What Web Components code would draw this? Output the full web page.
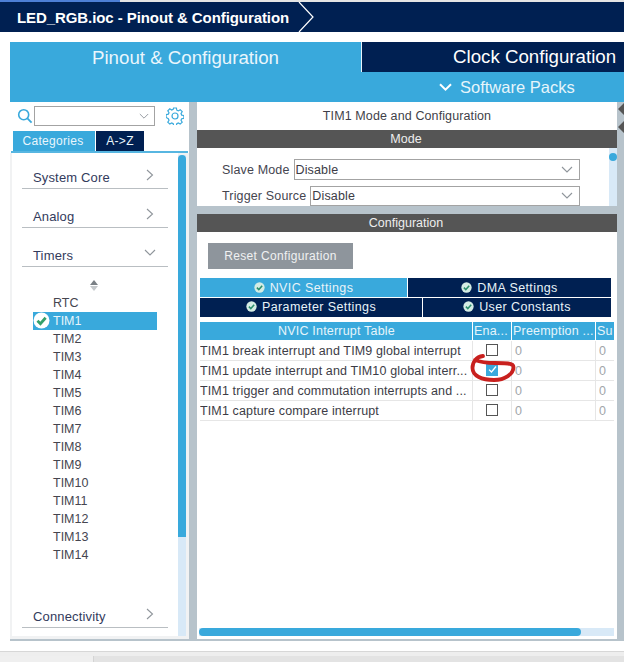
<!DOCTYPE html>
<html>
<head>
<meta charset="utf-8">
<title>LED_RGB.ioc - Pinout & Configuration</title>
<style>
  html, body { margin: 0; padding: 0; background: #fff; }
  body { width: 624px; height: 662px; overflow: hidden; font-family: "Liberation Sans", Arial, sans-serif; }
</style>
</head>
<body>
<cube-app></cube-app>

<script>
const NAVY = "#002052";
const BLUE = "#39a9dc";
const GREY = "#b7c3cb";

const CHECK_BADGE = (size, bg, fg, width = 2.2) => `
  <svg width="${size}" height="${size}" viewBox="0 0 16 16" style="flex:none">
    <circle cx="8" cy="8" r="7.5" fill="${bg}"/>
    <path d="M4.2 8.2 7 11 11.9 5.4" fill="none" stroke="${fg}" stroke-width="${width}"/>
  </svg>`;

const CHEVRON_RIGHT = `<svg width="8" height="12" viewBox="0 0 8 12"><path d="M1 1l5.5 5L1 11" fill="none" stroke="#8f959b" stroke-width="1.1"/></svg>`;
const CHEVRON_DOWN = `<svg width="12" height="8" viewBox="0 0 12 8"><path d="M1 1l5 5 5-5" fill="none" stroke="#8f959b" stroke-width="1.1"/></svg>`;

// ----------------------- BREADCRUMB -----------------------
class CubeTitleBar extends HTMLElement {
  constructor() {
    super();
    this.attachShadow({ mode: "open" }).innerHTML = `
      <style>
        :host { display: block; }
        .line { height: 2px; background: linear-gradient(to right, #4d7fd6 120px, #e4e4e4 120px); }
        .bar { height: 30px; background: ${NAVY}; display: flex; align-items: center; padding-left: 17px;
               color: #fff; font-size: 15px; font-weight: bold; letter-spacing: -.08px; gap: 9px; }
        svg { flex: none; }
      </style>
      <div class="line"></div>
      <div class="bar">
        <slot></slot>
        <svg width="17" height="30" viewBox="0 0 17 30"><path d="M1 0l14 15L1 30" fill="none" stroke="#fff" stroke-width="1.2"/></svg>
      </div>`;
  }
}

// ----------------------- MAIN TABS -----------------------
class CubeMainTabs extends HTMLElement {
  constructor() {
    super();
    this.attachShadow({ mode: "open" }).innerHTML = `
      <style>
        :host { display: flex; height: 60px; margin: 10px 0 0 10px; background: ${BLUE}; color: #fff; font-size: 18.7px; white-space: nowrap; }
        .pinout { width: 351px; padding: 4px 0 0 82px; box-sizing: border-box; line-height: 24px; color: #eaf6fc; }
        .right { flex: 1; min-width: 0; border-left: 1px solid #e8f4fa; display: flex; flex-direction: column; }
        .clock { height: 30px; background: ${NAVY}; line-height: 30px; padding-left: 91px; }
        .packs { height: 30px; margin-left: -1px; background: ${BLUE}; color: #e6f5fb; font-size: 16.5px; line-height: 30px;
                 display: flex; align-items: center; gap: 8px; padding-left: 78px; }
      </style>
      <div class="pinout">Pinout &amp; Configuration</div>
      <div class="right">
        <div class="clock">Clock Configuration</div>
        <div class="packs">
          <svg width="13" height="9" viewBox="0 0 13 9"><path d="M1 1.2l5.5 5.5L12 1.2" fill="none" stroke="#fff" stroke-width="2"/></svg>
          Software Packs
        </div>
      </div>`;
  }
}

// ----------------------- SIDEBAR -----------------------
class CubeCategory extends HTMLElement {
  constructor() {
    super();
    const open = this.hasAttribute("open");
    this.attachShadow({ mode: "open" }).innerHTML = `
      <style>
        :host { display: flex; justify-content: space-between; align-items: center; box-sizing: border-box;
                width: 146px; height: 23px; margin-left: 10px; border-bottom: 1px solid #b9bec2;
                color: #333b5c; font-size: 13px; letter-spacing: .15px; padding: 0 14px 0 11px; }
        span { display: flex; margin-top: -4px; }
      </style>
      <slot></slot><span>${open ? CHEVRON_DOWN : CHEVRON_RIGHT}</span>`;
    if (open) this.shadowRoot.querySelector("span").style.marginRight = "-2px";
  }
}

class CubePeripheral extends HTMLElement {
  constructor() {
    super();
    const on = this.hasAttribute("selected");
    this.attachShadow({ mode: "open" }).innerHTML = `
      <style>
        :host { display: flex; align-items: center; height: 18px; width: 124px; box-sizing: border-box; padding-left: 20px;
                position: relative; font-size: 12.5px; color: ${on ? "#e6f5fb" : "#45454f"}; background: ${on ? BLUE : "transparent"}; }
        .badge { position: absolute; left: 0; top: 0; display: flex; }
      </style>
      ${on ? `<span class="badge">${CHECK_BADGE(17, "#fff", "#35a06a", 2.6)}</span>` : ""}
      <slot></slot>`;
  }
}

class CubeSidebar extends HTMLElement {
  constructor() {
    super();
    const names = ["RTC", "TIM1", "TIM2", "TIM3", "TIM4", "TIM5", "TIM6", "TIM7", "TIM8", "TIM9", "TIM10", "TIM11", "TIM12", "TIM13", "TIM14"];
    this.attachShadow({ mode: "open" }).innerHTML = `
      <style>
        :host { display: flex; flex-direction: column; width: 179px; flex: none; background: #fff; }
        .search { height: 29px; display: flex; align-items: center; padding: 0 0 1px 7px; box-sizing: border-box; gap: 1px; }
        .combo { width: 121px; height: 20px; box-sizing: border-box; border: 1px solid #a3a3a3; display: flex;
                 align-items: center; justify-content: flex-end; padding-right: 5px; margin-right: 10px; }
        .tabs { display: flex; height: 20px; padding-left: 3px; gap: 1px; font-size: 12px; letter-spacing: .3px; }
        .tabs div { display: flex; align-items: center; justify-content: center; color: #e8f6fc; }
        .cat { width: 82px; padding-right: 2px; box-sizing: border-box; background: ${BLUE}; }
        .az { width: 48px; background: ${NAVY}; }
        .rule { height: 2px; background: ${BLUE}; margin: 0 1px; opacity: .85; }
        .body { flex: 1; display: flex; min-height: 0; padding-left: 2px; background: #f1f2f3; }
        .tree { flex: 1; background: #fff; display: flex; flex-direction: column; padding-top: 13px; margin-bottom: 3px; }
        .tree cube-category { margin-bottom: 16px; }
        .sort { display: flex; justify-content: flex-start; margin: -3px 0 3px 78px; height: 11px; }
        .list { display: flex; flex-direction: column; margin-left: 21px; }
        .spacer { flex: 1; }
        .tree cube-category:last-child { margin-bottom: 8px; }
        .scroll { width: 8px; margin: 2px 3px 3px 0; background: #d8e9f7; }
        .thumb { height: 382px; background: ${BLUE}; border-radius: 4px 4px 0 0; }
      </style>
      <div class="search">
        <svg width="16" height="16" viewBox="0 0 16 16"><circle cx="6.7" cy="6.7" r="5" fill="none" stroke="${BLUE}" stroke-width="1.6"/><path d="M10.4 10.4 14.6 14.6" stroke="${BLUE}" stroke-width="1.8"/></svg>
        <div class="combo">${CHEVRON_DOWN.replace('width="12" height="8"', 'width="10" height="7"')}</div>
        <svg width="18" height="18" viewBox="0 0 18 18"><g fill="none" stroke="${BLUE}" stroke-width="1.2"><circle cx="9" cy="9" r="3"/><path d="M7.6 1h2.8l.4 2.2 1.5.7 1.9-1.2 2 2-1.2 1.9.7 1.5 2.2.4v2.8l-2.2.4-.7 1.5 1.2 1.9-2 2-1.9-1.2-1.5.7-.4 2.2H7.6l-.4-2.2-1.5-.7-1.9 1.2-2-2 1.2-1.9-.7-1.5L.1 10.400V7.600l2.2-.4.7-1.5-1.200-1.900 2-2 1.900 1.200 1.500-.7z"/></g></svg>
      </div>
      <div class="tabs"><div class="cat">Categories</div><div class="az">A-&gt;Z</div></div>
      <div class="rule"></div>
      <div class="body">
        <div class="tree">
          <cube-category>System Core</cube-category>
          <cube-category>Analog</cube-category>
          <cube-category open>Timers</cube-category>
          <div class="sort"><svg width="8" height="11" viewBox="0 0 8 11"><path d="M4 0l4 5H0z" fill="#7a8085"/><path d="M4 11l4-5H0z" fill="#c4c8cb"/></svg></div>
          <div class="list">${names.map((n) => `<cube-peripheral ${n === "TIM1" ? "selected" : ""}>${n}</cube-peripheral>`).join("")}</div>
          <div class="spacer"></div>
          <cube-category>Connectivity</cube-category>
        </div>
        <div class="scroll"><div class="thumb"></div></div>
      </div>`;
  }
}

// ----------------------- MODE PANEL -----------------------
class CubeSelectRow extends HTMLElement {
  constructor() {
    super();
    this.attachShadow({ mode: "open" }).innerHTML = `
      <style>
        :host { display: flex; align-items: center; color: #45454f; font-size: 12.5px; padding-left: 25px; height: 21px; letter-spacing: .15px; }
        .label { padding-top: 1px; }
        .box { flex: 1; height: 100%; margin: 0 29px 0 4px; box-sizing: border-box; border: 1px solid #a3a3a3;
               display: flex; align-items: center; justify-content: space-between; padding: 1px 6px 0 1px; color: #3c3c46; }
      </style>
      <span class="label"><slot></slot></span>
      <div class="box">${this.getAttribute("value")}${CHEVRON_DOWN}</div>`;
  }
}

class CubeHeader extends HTMLElement {
  constructor() {
    super();
    this.attachShadow({ mode: "open" }).innerHTML = `
      <style>
        :host { display: block; height: 18px; line-height: 19px; background: #555; color: #eee; font-size: 12.5px;
                text-align: center; padding-right: 2px; box-sizing: border-box; }
      </style><slot></slot>`;
  }
}

// ----------------------- SETTINGS TABS -----------------------
class CubeSettingTab extends HTMLElement {
  constructor() {
    super();
    const active = this.hasAttribute("active");
    this.attachShadow({ mode: "open" }).innerHTML = `
      <style>
        :host { display: flex; align-items: center; justify-content: center; gap: 5px; box-sizing: border-box;
                background: ${active ? BLUE : NAVY}; color: #e8f3f8; font-size: 12.5px; letter-spacing: .4px; }
        :host([raised]) { padding-bottom: 2px; }
      </style>
      ${CHECK_BADGE(11, "#d4ece4", "#2c8f6c")}<slot></slot>`;
  }
}

// ----------------------- NVIC TABLE -----------------------
class CubeNvicRow extends HTMLElement {
  constructor() {
    super();
    const on = this.hasAttribute("checked");
    this.attachShadow({ mode: "open" }).innerHTML = `
      <style>
        :host { display: grid; grid-template-columns: 273px 39px 84px 1fr; height: 20px; box-sizing: border-box;
                border-bottom: 1px solid #e6e6e6; font-size: 12.5px; letter-spacing: .13px; color: #3c3c46; }
        div { display: flex; align-items: center; border-right: 1px solid #e6e6e6; white-space: nowrap; overflow: hidden; }
        .chk { justify-content: center; padding: 0 0 2px; }
        .chk span { display: flex; align-items: center; justify-content: center; width: 10px; height: 10px; border: 1px solid #555; background: #fff; }
        .chk span.on { background: ${BLUE}; border-color: ${BLUE}; }
        .num { color: #a2a6aa; padding-left: 3px; }
        .num:last-child { border-right: none; }
      </style>
      <div><slot></slot></div>
      <div class="chk"><span class="${on ? "on" : ""}">${on ? '<svg width="9" height="9" viewBox="0 0 9 9"><path d="M1 4.600 3.500 7 8 1.500" fill="none" stroke="#fff" stroke-width="1.300"/></svg>' : ""}</span></div>
      <div class="num">0</div>
      <div class="num">0</div>`;
  }
}

class CubeNvicTable extends HTMLElement {
  constructor() {
    super();
    this.attachShadow({ mode: "open" }).innerHTML = `
      <style>
        :host { display: block; position: relative; width: 414px; margin-left: 3px; }
        .head { display: grid; grid-template-columns: 273px 39px 84px 1fr; gap: 0; height: 18px; margin-bottom: 1px;
                font-size: 12.5px; letter-spacing: .2px; color: #e6f5fb; }
        .head div { background: ${BLUE}; border-right: 1px solid #fff; line-height: 19px; white-space: nowrap; overflow: hidden; padding-left: 1px; }
        .head div:first-child { text-align: center; }
        .head div:last-child { border-right: none; }
        .mark { position: absolute; left: 270px; top: 32px; }
      </style>
      <div class="head"><div>NVIC Interrupt Table</div><div>Ena...</div><div>Preemption ...</div><div>Su</div></div>
      <slot></slot>
      <svg class="mark" width="46" height="28" viewBox="0 0 46 28">
        <path d="M13 2C6 3 2.500 8 2.500 14 2.500 22 12 26 24 26 35 26 43.500 20 43.500 13 43.500 9 35 9 25 9 18 9 10 8 5 6" fill="none" stroke="#c8201e" stroke-width="3.800" stroke-linecap="round"/>
      </svg>`;
  }
}

// ----------------------- RIGHT PANEL -----------------------
class CubeConfigPanel extends HTMLElement {
  constructor() {
    super();
    this.attachShadow({ mode: "open" }).innerHTML = `
      <style>
        :host { display: flex; flex-direction: column; flex: 1; min-width: 0; background: #fff; }
        .title { height: 28px; line-height: 28px; text-align: center; color: #3f3f49; font-size: 12.5px; letter-spacing: .11px; }
        .mode { height: 58px; display: flex; overflow: hidden; }
        .fields { flex: 1; display: flex; flex-direction: column; gap: 6px; padding-top: 11px; }
        .vscroll { width: 8px; background: #d8e9f7; display: flex; justify-content: center; }
        .dot { width: 8px; height: 8px; margin-top: 5px; border-radius: 50%; background: ${BLUE}; }
        .gap { height: 8px; background: ${GREY}; }
        .reset { width: 145px; height: 26px; margin: 11px 0 9px 11px; background: #8e959c; color: #f0f1f2; font-size: 12px;
                 letter-spacing: .35px; display: flex; align-items: center; justify-content: center; }
        .tabrow { display: grid; height: 19px; margin: 0 6px 1px 3px; gap: 1px; }
        .r1 { grid-template-columns: 207px 1fr; }
        .r2 { grid-template-columns: 222px 1fr; margin-bottom: 5px; }
        .content { flex: 1; display: flex; flex-direction: column; min-height: 0; }
        .spacer { flex: 1; }
        .hscroll { height: 8px; margin: 0 3px 3px 2px; background: #d8e9f7; }
        .hscroll div { width: 382px; height: 8px; background: ${BLUE}; border-radius: 4px; }
      </style>
      <div class="title">TIM1 Mode and Configuration</div>
      <cube-header>Mode</cube-header>
      <div class="mode">
        <div class="fields">
          <cube-select-row value="Disable">Slave Mode</cube-select-row>
          <cube-select-row value="Disable">Trigger Source</cube-select-row>
        </div>
        <div class="vscroll"><div class="dot"></div></div>
      </div>
      <div class="gap"></div>
      <cube-header>Configuration</cube-header>
      <div class="content">
        <div class="reset">Reset Configuration</div>
        <div class="tabrow r1"><cube-setting-tab active>NVIC Settings</cube-setting-tab><cube-setting-tab>DMA Settings</cube-setting-tab></div>
        <div class="tabrow r2"><cube-setting-tab raised>Parameter Settings</cube-setting-tab><cube-setting-tab raised>User Constants</cube-setting-tab></div>
        <cube-nvic-table>
          <cube-nvic-row>TIM1 break interrupt and TIM9 global interrupt</cube-nvic-row>
          <cube-nvic-row checked>TIM1 update interrupt and TIM10 global interr...</cube-nvic-row>
          <cube-nvic-row>TIM1 trigger and commutation interrupts and ...</cube-nvic-row>
          <cube-nvic-row>TIM1 capture compare interrupt</cube-nvic-row>
        </cube-nvic-table>
        <div class="spacer"></div>
        <div class="hscroll"><div></div></div>
      </div>`;
  }
}

// ----------------------- APP -----------------------
class CubeApp extends HTMLElement {
  constructor() {
    super();
    this.attachShadow({ mode: "open" }).innerHTML = `
      <style>
        :host { display: flex; flex-direction: column; width: 624px; height: 662px; }
        .work { height: 537px; margin-left: 10px; display: flex; background: ${GREY}; border-bottom: 2px solid ${GREY}; }
        .divider { width: 8px; flex: none; }
        .edge { width: 7px; flex: none; position: relative; overflow: hidden; }
        .edge svg { position: absolute; left: 0; top: 1px; }
        .foot { flex: 1; background: #fff; display: flex; flex-direction: column; padding-top: 10px; }
        .strip { height: 4px; border-top: 1px solid #d7d7d7; background: #eee; }
        .status { flex: 1; display: flex; background: #e3e3e3; }
        .status div { width: 93px; background: #efefef; border-right: 1px solid #d4d4d4; }
      </style>
      <cube-title-bar>LED_RGB.ioc - Pinout &amp; Configuration</cube-title-bar>
      <cube-main-tabs></cube-main-tabs>
      <div class="work">
        <cube-sidebar></cube-sidebar>
        <div class="divider"></div>
        <cube-config-panel></cube-config-panel>
        <div class="edge"><svg width="7" height="30" viewBox="0 0 7 30"><path d="M7 0 1 6l6 6zM7 18 1 24l6 6z" fill="#555"/></svg></div>
      </div>
      <div class="foot"><div class="strip"></div><div class="status"><div></div></div></div>`;
  }
}

customElements.define("cube-title-bar", CubeTitleBar);
customElements.define("cube-main-tabs", CubeMainTabs);
customElements.define("cube-category", CubeCategory);
customElements.define("cube-peripheral", CubePeripheral);
customElements.define("cube-sidebar", CubeSidebar);
customElements.define("cube-select-row", CubeSelectRow);
customElements.define("cube-header", CubeHeader);
customElements.define("cube-setting-tab", CubeSettingTab);
customElements.define("cube-nvic-row", CubeNvicRow);
customElements.define("cube-nvic-table", CubeNvicTable);
customElements.define("cube-config-panel", CubeConfigPanel);
customElements.define("cube-app", CubeApp);
</script>
</body>
</html>
